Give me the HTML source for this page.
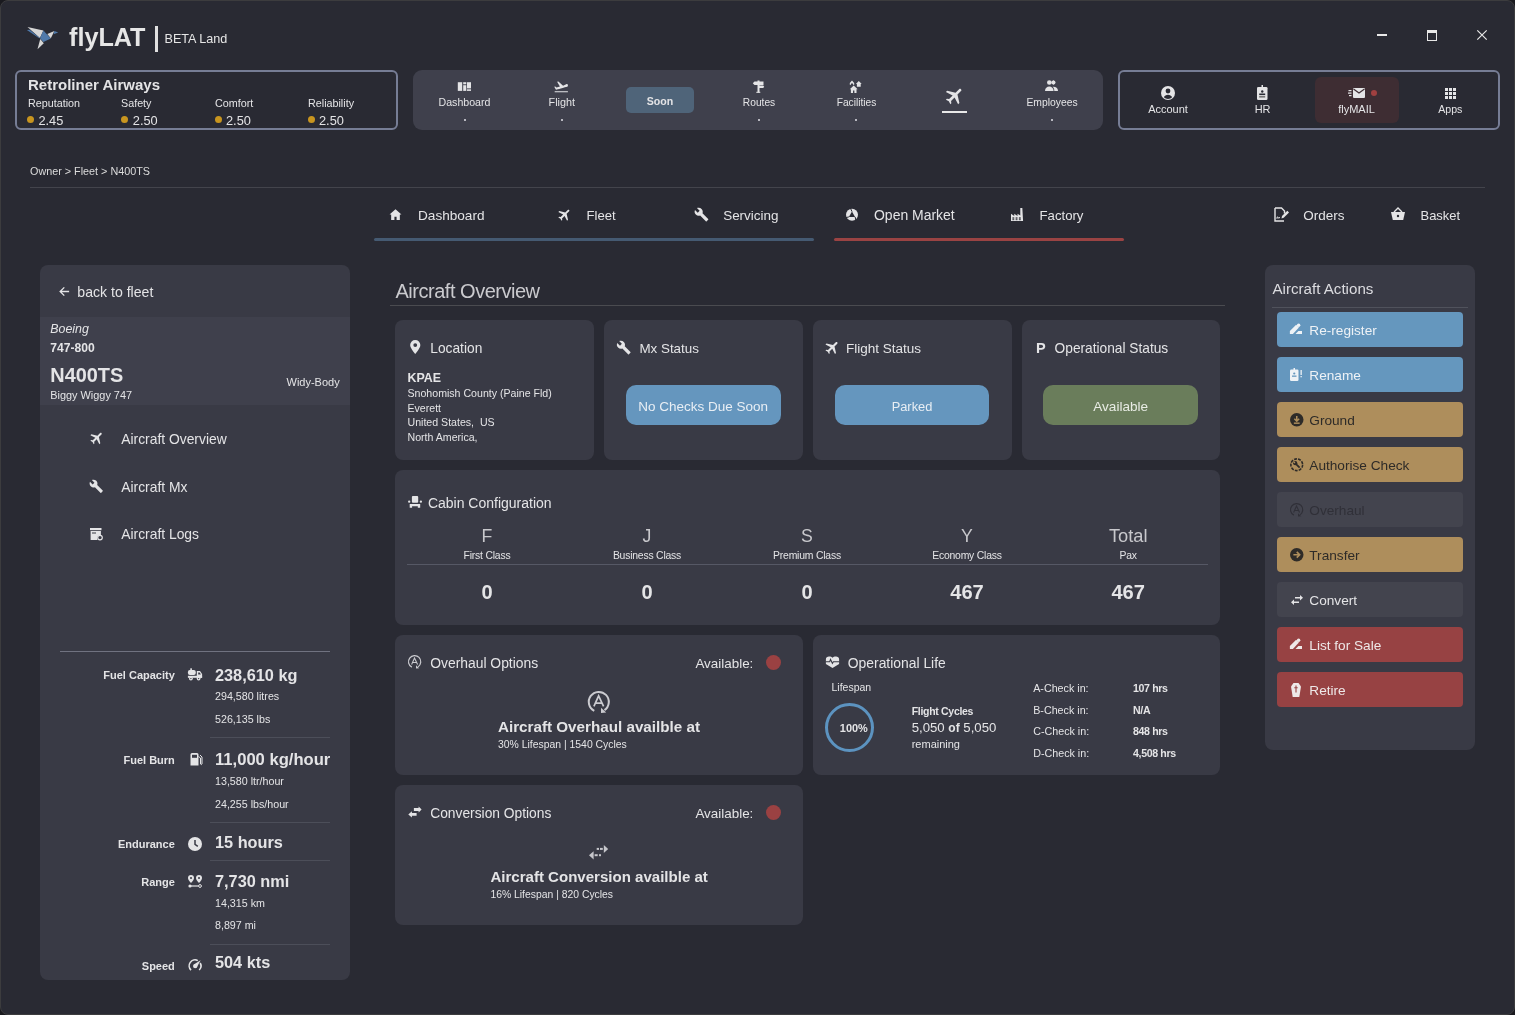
<!DOCTYPE html><html><head><meta charset="utf-8"><title>flyLAT</title><style>
html,body{margin:0;padding:0;width:1515px;height:1015px;overflow:hidden;background:#1a1a1f;}
body{font-family:"Liberation Sans",sans-serif;position:relative;-webkit-font-smoothing:antialiased;}
#win>div{will-change:transform;}
#win{position:absolute;left:0;top:0;width:1513px;height:1013px;border:1px solid #3c3c3e;border-radius:8px;background:#292a33;overflow:hidden;}
.t{position:absolute;white-space:nowrap;}
.r{position:absolute;}
.i{position:absolute;overflow:visible;}

</style></head><body><div id="win">
<div style="position:absolute;left:-1px;top:-1px;width:1515px;height:1015px;">
<svg class="i" style="left:27px;top:27px;width:32px;height:23px" viewBox="27 27 32 23" fill="#e4e4e6"><polygon points="27.5,26.9 43.4,30.4 39.9,38.1" fill="#d6d6d6"/><polygon points="26.9,30.1 29.6,29.7 39.9,38.1 39.2,38.3" fill="#4f79aa"/><polygon points="43.4,30.4 50.8,38.4 43.4,42 40.0,38.3" fill="#4f79aa"/><polygon points="47.3,34 54.4,31 50.8,38.2" fill="#d6d6d6"/><polygon points="54.4,31 58.2,32.5 53.6,34.3" fill="#4f79aa"/><polygon points="40.2,39 43.8,43.3 37.5,49.3" fill="#d6d6d6"/></svg>
<div class="t" style="top:25px;font-size:25.2px;line-height:25.2px;color:#e6e6e6;font-weight:700;left:69.00px;">flyLAT</div>
<div class="r" style="left:155px;top:26px;width:3px;height:26px;background:#e0e0e0;"></div>
<div class="t" style="top:33px;font-size:12.6px;line-height:12.6px;color:#e6e6e6;left:164.50px;">BETA Land</div>
<div class="r" style="left:1377px;top:33.5px;width:10px;height:2px;background:#e8e8e8;"></div>
<div class="r" style="left:1427px;top:30px;width:8px;height:7px;border:1px solid #e8e8e8;border-top:3px solid #e8e8e8;"></div>
<svg class="i" style="left:1477px;top:30px;width:10px;height:10px" viewBox="0 0 10 10" fill="#e4e4e6"><path d="M0.3 0.3 9.7 9.7M9.7 0.3 0.3 9.7" stroke="#e8e8e8" stroke-width="1.2" fill="none"/></svg>
<div class="r" style="left:15px;top:70px;width:379px;height:56px;border:2px solid #767d95;border-radius:6px;"></div>
<div class="t" style="top:77px;font-size:15.0px;line-height:15.0px;color:#e4e4e6;font-weight:700;left:28.00px;">Retroliner Airways</div>
<div class="t" style="top:98px;font-size:10.75px;line-height:10.75px;color:#e4e4e6;left:28.00px;">Reputation</div>
<div class="r" style="left:27.0px;top:116.2px;width:7px;height:7px;border-radius:50%;background:#c8951f;"></div>
<div class="t" style="top:115px;font-size:12.8px;line-height:12.8px;color:#e4e4e6;left:38.40px;">2.45</div>
<div class="t" style="top:98px;font-size:10.75px;line-height:10.75px;color:#e4e4e6;left:121.00px;">Safety</div>
<div class="r" style="left:121.0px;top:116.2px;width:7px;height:7px;border-radius:50%;background:#c8951f;"></div>
<div class="t" style="top:115px;font-size:12.8px;line-height:12.8px;color:#e4e4e6;left:132.80px;">2.50</div>
<div class="t" style="top:98px;font-size:10.75px;line-height:10.75px;color:#e4e4e6;left:215.00px;">Comfort</div>
<div class="r" style="left:214.8px;top:116.2px;width:7px;height:7px;border-radius:50%;background:#c8951f;"></div>
<div class="t" style="top:115px;font-size:12.8px;line-height:12.8px;color:#e4e4e6;left:226.00px;">2.50</div>
<div class="t" style="top:98px;font-size:10.75px;line-height:10.75px;color:#e4e4e6;left:308.00px;">Reliability</div>
<div class="r" style="left:308.2px;top:116.2px;width:7px;height:7px;border-radius:50%;background:#c8951f;"></div>
<div class="t" style="top:115px;font-size:12.8px;line-height:12.8px;color:#e4e4e6;left:319.00px;">2.50</div>
<div class="r" style="left:413px;top:70px;width:690px;height:60px;background:#3f404c;border-radius:9px;"></div>
<svg class="i" style="left:455px;top:80px;width:19px;height:13px" viewBox="455 80 19 13" fill="#e4e4e6"><path d="M457.8 82.2h4.4v8.7h-4.4z"/><path d="M463.2 82.2h3.1v2.1h-3.1z"/><path d="M463.2 85.2h3.1v5.7h-3.1z"/><path d="M467 82.2h4v6.2h-4z"/><path d="M467 89.3h4v1.6h-4z"/></svg>
<div class="t" style="top:97px;font-size:10.6px;line-height:10.6px;color:#e4e4e6;left:164.50px;width:600px;text-align:center;">Dashboard</div>
<div class="r" style="left:464px;top:119px;width:2px;height:2px;background:#b8b8c0;"></div>
<svg class="i" style="left:553.1px;top:78.6px;width:16.2px;height:16.2px" viewBox="0 0 24 24" fill="#e4e4e6"><path d="M2.5 18h19.6v1.7h-19.6zm19.57-9.36c-.21-.8-1.04-1.28-1.84-1.06L14.92 10l-6.9-6.43-1.93.51 4.14 7.17-4.97 1.33-1.97-1.54-1.45.39 2.59 4.49s7.12-1.9 16.57-4.43c.81-.23 1.28-1.05 1.07-1.85z"/></svg>
<div class="t" style="top:97px;font-size:10.8px;line-height:10.8px;color:#e4e4e6;left:261.80px;width:600px;text-align:center;">Flight</div>
<div class="r" style="left:560.5px;top:119px;width:2px;height:2px;background:#b8b8c0;"></div>
<div class="r" style="left:626px;top:87px;width:68px;height:26px;background:#4f6479;border-radius:5px;"></div>
<div class="t" style="top:96px;font-size:10.6px;line-height:10.6px;color:#e4e4e6;font-weight:700;left:360.00px;width:600px;text-align:center;">Soon</div>
<svg class="i" style="left:750px;top:78px;width:17px;height:17px" viewBox="750 78 17 17" fill="#e4e4e6"><path d="M757.5 80.5h2v12h-2z"/><path d="M752.8 83.2 754.5 81.5h9v3.5h-9z"/><path d="M759 85.5h4.2l1 1.2-1 1.2H759z"/><path d="M756.3 91.8h4v1h-4z"/></svg>
<div class="t" style="top:98px;font-size:10.2px;line-height:10.2px;color:#e4e4e6;left:459.00px;width:600px;text-align:center;">Routes</div>
<div class="r" style="left:758.3px;top:119px;width:2px;height:2px;background:#b8b8c0;"></div>
<svg class="i" style="left:847px;top:78px;width:18px;height:17px" viewBox="847 78 18 17" fill="#e4e4e6"><path d="M852 80.5 849.8 83v1.8h1.2v-1.3h2v1.3h1.2V83z"/><path d="M858.8 81 855.9 84h1v2.7h3.8V84h1z"/><path d="M853.7 85.5 849.8 89.2h1.1V93h5.6v-3.8h1.1z"/><path d="M853 90.6h1.4V93H853z" fill="#3f404c"/></svg>
<div class="t" style="top:98px;font-size:10.2px;line-height:10.2px;color:#e4e4e6;left:556.50px;width:600px;text-align:center;">Facilities</div>
<div class="r" style="left:855.3px;top:119px;width:2px;height:2px;background:#b8b8c0;"></div>
<svg class="i" style="left:943.79px;top:85.09px;width:21.81px;height:21.81px" viewBox="0 0 24 24" fill="#e4e4e6"><path d="M21 16v-2l-8-5V3.5c0-.83-.67-1.5-1.5-1.5S10 2.67 10 3.5V9l-8 5v2l8-2.5V19l-2 1.5V22l3.5-1 3.5 1v-1.5L13 19v-5.5l8 2.5z" transform="rotate(45 12 12)"/></svg>
<div class="r" style="left:942px;top:111px;width:25px;height:2px;background:#e8e8e8;"></div>
<svg class="i" style="left:1045px;top:80px;width:13px;height:11px" viewBox="0 0 13 11" fill="#e4e4e6"><circle cx="4.3" cy="2.5" r="2.3"/><path d="M8 0.3a2.3 2.3 0 0 1 0 4.5z"/><circle cx="8.4" cy="2.5" r="2.1"/><path d="M0 11c0-3 2-4.6 4.3-4.6S8.6 8 8.6 11z"/><path d="M9.3 11c0-2-.6-3.3-1.6-4.2 2.6-.3 5.3 1 5.3 4.2z"/></svg>
<div class="t" style="top:98px;font-size:10.35px;line-height:10.35px;color:#e4e4e6;left:752.00px;width:600px;text-align:center;">Employees</div>
<div class="r" style="left:1051.2px;top:119px;width:2px;height:2px;background:#b8b8c0;"></div>
<div class="r" style="left:1118px;top:70px;width:378px;height:56px;border:2px solid #767d95;border-radius:6px;"></div>
<div class="r" style="left:1315px;top:77px;width:84px;height:46px;background:#3e2d33;border-radius:6px;"></div>
<svg class="i" style="left:1161px;top:86px;width:14px;height:14px" viewBox="0 0 14 14" fill="#e4e4e6"><circle cx="7" cy="7" r="7"/><circle cx="7" cy="5" r="2.4" fill="#292a33"/><path d="M2.8 11.3c.8-1.6 2.4-2.5 4.2-2.5s3.4.9 4.2 2.5A6 6 0 0 1 7 13a6 6 0 0 1-4.2-1.7z" fill="#292a33"/></svg>
<div class="t" style="top:104px;font-size:11.0px;line-height:11.0px;color:#e4e4e6;left:868.00px;width:600px;text-align:center;">Account</div>
<svg class="i" style="left:1257px;top:85px;width:10.5px;height:15px" viewBox="0 0 10.5 15" fill="#e4e4e6"><rect x="0" y="2" width="10.5" height="13" rx="1.3"/><rect x="4.5" y="0" width="1.5" height="3.5"/><circle cx="5.25" cy="6.5" r="1.2" fill="#292a33"/><rect x="2.2" y="8.5" width="6" height="1.6" fill="#292a33"/><rect x="2.2" y="11" width="6" height="1.6" fill="#777"/></svg>
<div class="t" style="top:104px;font-size:11.0px;line-height:11.0px;color:#e4e4e6;left:962.60px;width:600px;text-align:center;">HR</div>
<svg class="i" style="left:1348px;top:88px;width:17px;height:10px" viewBox="0 0 17 10" fill="#e4e4e6"><rect x="5" y="0" width="12" height="10" rx="1"/><path d="M5.5 1 11 5 16.5 1" stroke="#3e2d33" stroke-width="1.2" fill="none"/><rect x="0.5" y="2" width="3" height="1.2"/><rect x="0" y="4.5" width="3.5" height="1.2"/><rect x="1" y="7" width="2.5" height="1.2"/></svg>
<div class="r" style="left:1371px;top:90px;width:6px;height:6px;border-radius:50%;background:#a04040;"></div>
<div class="t" style="top:104px;font-size:11.0px;line-height:11.0px;color:#e4e4e6;left:1056.50px;width:600px;text-align:center;">flyMAIL</div>
<svg class="i" style="left:1445px;top:87.5px;width:11px;height:11px" viewBox="0 0 11 11" fill="#e4e4e6"><rect x="0" y="0" width="3" height="3"/><rect x="0" y="4" width="3" height="3"/><rect x="0" y="8" width="3" height="3"/><rect x="4" y="0" width="3" height="3"/><rect x="4" y="4" width="3" height="3"/><rect x="4" y="8" width="3" height="3"/><rect x="8" y="0" width="3" height="3"/><rect x="8" y="4" width="3" height="3"/><rect x="8" y="8" width="3" height="3"/></svg>
<div class="t" style="top:104px;font-size:10.6px;line-height:10.6px;color:#e4e4e6;left:1150.30px;width:600px;text-align:center;">Apps</div>
<div class="t" style="top:166px;font-size:10.8px;line-height:10.8px;color:#dcdcdc;left:30.00px;">Owner &gt; Fleet &gt; N400TS</div>
<div class="r" style="left:30px;top:187px;width:1455px;height:1px;background:#43444c;"></div>
<svg class="i" style="left:389px;top:208px;width:13px;height:12px" viewBox="0 0 24 22" fill="#e4e4e6"><path d="M12 2 1 12h3v10h6v-6h4v6h6V12h3z"/></svg>
<div class="t" style="top:209px;font-size:13.6px;line-height:13.6px;color:#e4e4e6;left:418.00px;">Dashboard</div>
<svg class="i" style="left:556.91px;top:206.71px;width:15.58px;height:15.58px" viewBox="0 0 24 24" fill="#e4e4e6"><path d="M21 16v-2l-8-5V3.5c0-.83-.67-1.5-1.5-1.5S10 2.67 10 3.5V9l-8 5v2l8-2.5V19l-2 1.5V22l3.5-1 3.5 1v-1.5L13 19v-5.5l8 2.5z" transform="rotate(45 12 12)"/></svg>
<div class="t" style="top:209px;font-size:13.1px;line-height:13.1px;color:#e4e4e6;left:586.50px;">Fleet</div>
<svg class="i" style="left:694px;top:207px;width:15px;height:15px" viewBox="0 0 24 24" fill="#e4e4e6"><path d="M22.7 19l-9.1-9.1c.9-2.3.4-5-1.5-6.9-2-2-5-2.4-7.4-1.3L9 6 6 9 1.6 4.7C.4 7.1.9 10.1 2.9 12.1c1.9 1.9 4.6 2.4 6.9 1.5l9.1 9.1c.4.4 1 .4 1.4 0l2.3-2.3c.5-.4.5-1.1.1-1.4z"/></svg>
<div class="t" style="top:209px;font-size:13.45px;line-height:13.45px;color:#e4e4e6;left:723.20px;">Servicing</div>
<svg class="i" style="left:843px;top:206px;width:19px;height:18px" viewBox="843 206 19 18" fill="#e4e4e6"><circle cx="852" cy="214.7" r="6"/><path d="M852 211.6 848.9 216.9h6.2z" fill="#292a33"/><path d="M852 211.6 850.6 208.5M848.9 216.9 846 217.6M855.1 216.9 856 220.8" stroke="#292a33" stroke-width="1" fill="none"/></svg>
<div class="t" style="top:208px;font-size:13.98px;line-height:13.98px;color:#e4e4e6;left:874.00px;">Open Market</div>
<svg class="i" style="left:1011px;top:207.8px;width:13px;height:13.2px" viewBox="0 0 14 14" fill="#e4e4e6"><path d="M0 14V6l3.5 2.5V6L7 8.5V6l3 2V0h2.2v0L13 14z"/><rect x="1.5" y="10" width="2" height="1.4" fill="#292a33"/><rect x="5" y="10" width="2" height="1.4" fill="#292a33"/><rect x="8.5" y="10" width="2" height="1.4" fill="#292a33"/><rect x="1.5" y="12" width="2" height="1" fill="#292a33"/><rect x="5" y="12" width="2" height="1" fill="#292a33"/><rect x="8.5" y="12" width="2" height="1" fill="#292a33"/></svg>
<div class="t" style="top:209px;font-size:13.2px;line-height:13.2px;color:#e4e4e6;left:1039.50px;">Factory</div>
<svg class="i" style="left:1274px;top:208px;width:15px;height:13px" viewBox="0 0 15 13" fill="#e4e4e6"><path d="M1 0h6.5l3 3v2.5" stroke="#e4e4e6" stroke-width="1.4" fill="none"/><path d="M1 0v13h9" stroke="#e4e4e6" stroke-width="1.4" fill="none"/><path d="M7.5 10.5 8 8l5.3-5.3 1.7 1.7L9.7 9.7z"/><path d="M3 11V9h1v1h1.5v-1" stroke="#e4e4e6" stroke-width=".8" fill="none"/></svg>
<div class="t" style="top:209px;font-size:13.48px;line-height:13.48px;color:#e4e4e6;left:1303.30px;">Orders</div>
<svg class="i" style="left:1391px;top:208px;width:14px;height:12px" viewBox="0 0 14 12" fill="#e4e4e6"><path d="M0 4h14l-1.8 8H1.8z"/><path d="M3 4 7 0l4 4" stroke="#e4e4e6" stroke-width="1.4" fill="none"/><circle cx="7" cy="8" r="1.2" fill="#292a33"/></svg>
<div class="t" style="top:210px;font-size:12.95px;line-height:12.95px;color:#e4e4e6;left:1420.50px;">Basket</div>
<div class="r" style="left:373.6px;top:238.2px;width:440px;height:3.2px;background:#455a72;border-radius:1.6px;"></div>
<div class="r" style="left:833.6px;top:238.2px;width:290.4px;height:3.2px;background:#9a4343;border-radius:1.6px;"></div>
<div class="r" style="left:40px;top:265px;width:310px;height:715px;background:#393a45;border-radius:8px;"></div>
<div class="r" style="left:40px;top:317px;width:310px;height:88px;background:#3f404c;"></div>
<svg class="i" style="left:58.5px;top:285.8px;width:10.6px;height:11px" viewBox="0 0 11 11" fill="#e4e4e6"><path d="M10.5 5.5H1.5M5.5 1.2 1.2 5.5l4.3 4.3" stroke="#e4e4e6" stroke-width="1.4" fill="none"/></svg>
<div class="t" style="top:285px;font-size:14.1px;line-height:14.1px;color:#e4e4e6;left:77.30px;">back to fleet</div>
<div class="t" style="top:323px;font-size:12.4px;line-height:12.4px;color:#e4e4e6;font-style:italic;left:50.30px;">Boeing</div>
<div class="t" style="top:342px;font-size:12.1px;line-height:12.1px;color:#e4e4e6;font-weight:700;left:50.30px;">747-800</div>
<div class="t" style="top:366px;font-size:19.9px;line-height:19.9px;color:#e4e4e6;font-weight:700;left:50.30px;">N400TS</div>
<div class="t" style="top:390px;font-size:10.9px;line-height:10.9px;color:#e4e4e6;left:50.30px;">Biggy Wiggy 747</div>
<div class="t" style="top:377px;font-size:11.0px;line-height:11.0px;color:#e4e4e6;left:-260.30px;width:600px;text-align:right;">Widy-Body</div>
<svg class="i" style="left:88.50px;top:430.05px;width:16.01px;height:16.01px" viewBox="0 0 24 24" fill="#e4e4e6"><path d="M21 16v-2l-8-5V3.5c0-.83-.67-1.5-1.5-1.5S10 2.67 10 3.5V9l-8 5v2l8-2.5V19l-2 1.5V22l3.5-1 3.5 1v-1.5L13 19v-5.5l8 2.5z" transform="rotate(45 12 12)"/></svg>
<div class="t" style="top:433px;font-size:13.86px;line-height:13.86px;color:#e4e4e6;left:121.20px;">Aircraft Overview</div>
<svg class="i" style="left:88.5px;top:479px;width:14.5px;height:14.5px" viewBox="0 0 24 24" fill="#e4e4e6"><path d="M22.7 19l-9.1-9.1c.9-2.3.4-5-1.5-6.9-2-2-5-2.4-7.4-1.3L9 6 6 9 1.6 4.7C.4 7.1.9 10.1 2.9 12.1c1.9 1.9 4.6 2.4 6.9 1.5l9.1 9.1c.4.4 1 .4 1.4 0l2.3-2.3c.5-.4.5-1.1.1-1.4z"/></svg>
<div class="t" style="top:481px;font-size:13.86px;line-height:13.86px;color:#e4e4e6;left:121.20px;">Aircraft Mx</div>
<svg class="i" style="left:90px;top:528px;width:13px;height:12.5px" viewBox="0 0 13 12.5" fill="#e4e4e6"><rect x="0" y="0" width="11.5" height="2.2"/><path d="M0.6 3h10.3v4.5A3 3 0 0 0 7.5 12H0.6z"/><circle cx="10" cy="9.6" r="2.3" stroke="#e4e4e6" stroke-width="1.2" fill="none"/><rect x="2" y="4.5" width="4" height="1" fill="#393a45"/></svg>
<div class="t" style="top:528px;font-size:13.86px;line-height:13.86px;color:#e4e4e6;left:121.20px;">Aircraft Logs</div>
<div class="r" style="left:60px;top:651px;width:270px;height:1px;background:#707280;"></div>
<div class="t" style="top:670px;font-size:11.0px;line-height:11.0px;color:#e4e4e6;font-weight:700;left:-425.20px;width:600px;text-align:right;">Fuel Capacity</div>
<svg class="i" style="left:185px;top:666px;width:20px;height:16px" viewBox="185 666 20 16" fill="#e4e4e6"><rect x="187.9" y="669.9" width="7.9" height="5.1" rx="2"/><rect x="190.3" y="668.3" width="1.6" height="2"/><rect x="187.9" y="675.8" width="14.2" height="2"/><path d="M196.8 671.1h3.2l2.1 3v3.7h-5.3z"/><path d="M198.2 672.5h1.5l1.2 2.1h-2.7z" fill="#393a45"/><circle cx="190.9" cy="678.6" r="1.9"/><circle cx="198.6" cy="678.6" r="1.9"/><circle cx="190.9" cy="678.6" r=".7" fill="#393a45"/><circle cx="198.6" cy="678.6" r=".7" fill="#393a45"/></svg>
<div class="t" style="top:667px;font-size:16.3px;line-height:16.3px;color:#e4e4e6;font-weight:700;left:215.00px;">238,610 kg</div>
<div class="t" style="top:691px;font-size:10.7px;line-height:10.7px;color:#e4e4e6;left:215.00px;">294,580 litres</div>
<div class="t" style="top:714px;font-size:10.7px;line-height:10.7px;color:#e4e4e6;left:215.00px;">526,135 lbs</div>
<div class="r" style="left:210px;top:737px;width:120px;height:1px;background:#4c4e59;"></div>
<div class="t" style="top:755px;font-size:11.0px;line-height:11.0px;color:#e4e4e6;font-weight:700;left:-425.20px;width:600px;text-align:right;">Fuel Burn</div>
<svg class="i" style="left:189.5px;top:753px;width:12px;height:12.5px" viewBox="0 0 12 12.5" fill="#e4e4e6"><path d="M0.5 1.5A1.5 1.5 0 0 1 2 0h5a1.5 1.5 0 0 1 1.5 1.5v11H.5z"/><rect x="2" y="1.8" width="5" height="3" fill="#393a45"/><path d="M8.5 3.5 10.5 5v6a.9.9 0 0 0 1.5 0V4L10 2" stroke="#e4e4e6" stroke-width="1" fill="none"/></svg>
<div class="t" style="top:752px;font-size:16.6px;line-height:16.6px;color:#e4e4e6;font-weight:700;left:215.00px;">11,000 kg/hour</div>
<div class="t" style="top:776px;font-size:10.7px;line-height:10.7px;color:#e4e4e6;left:215.00px;">13,580 ltr/hour</div>
<div class="t" style="top:799px;font-size:10.7px;line-height:10.7px;color:#e4e4e6;left:215.00px;">24,255 lbs/hour</div>
<div class="r" style="left:210px;top:822px;width:120px;height:1px;background:#4c4e59;"></div>
<div class="t" style="top:839px;font-size:11.0px;line-height:11.0px;color:#e4e4e6;font-weight:700;left:-425.20px;width:600px;text-align:right;">Endurance</div>
<svg class="i" style="left:188px;top:836.5px;width:14px;height:14px" viewBox="0 0 14 14" fill="#e4e4e6"><circle cx="7" cy="7" r="7"/><path d="M7 3v4.3l2.8 2" stroke="#393a45" stroke-width="1.5" fill="none"/></svg>
<div class="t" style="top:834px;font-size:16.3px;line-height:16.3px;color:#e4e4e6;font-weight:700;left:215.00px;">15 hours</div>
<div class="r" style="left:210px;top:859.5px;width:120px;height:1px;background:#4c4e59;"></div>
<div class="t" style="top:877px;font-size:11.0px;line-height:11.0px;color:#e4e4e6;font-weight:700;left:-425.20px;width:600px;text-align:right;">Range</div>
<svg class="i" style="left:188px;top:874.5px;width:14px;height:13px" viewBox="0 0 14 13" fill="#e4e4e6"><path d="M3 0a3 3 0 0 1 3 3c0 2-3 5-3 5S0 5 0 3a3 3 0 0 1 3-3z"/><path d="M11 0a3 3 0 0 1 3 3c0 2-3 5-3 5S8 5 8 3a3 3 0 0 1 3-3z"/><circle cx="3" cy="3" r="1" fill="#393a45"/><circle cx="11" cy="3" r="1" fill="#393a45"/><circle cx="2" cy="11" r="1.6"/><circle cx="12" cy="11" r="1.4" stroke="#e4e4e6" stroke-width="1" fill="none"/><rect x="3" y="10.4" width="7.5" height="1.2"/></svg>
<div class="t" style="top:873px;font-size:16.3px;line-height:16.3px;color:#e4e4e6;font-weight:700;left:215.00px;">7,730 nmi</div>
<div class="t" style="top:898px;font-size:10.7px;line-height:10.7px;color:#e4e4e6;left:215.00px;">14,315 km</div>
<div class="t" style="top:920px;font-size:10.7px;line-height:10.7px;color:#e4e4e6;left:215.00px;">8,897 mi</div>
<div class="r" style="left:210px;top:944px;width:120px;height:1px;background:#4c4e59;"></div>
<div class="t" style="top:961px;font-size:11.0px;line-height:11.0px;color:#e4e4e6;font-weight:700;left:-425.20px;width:600px;text-align:right;">Speed</div>
<svg class="i" style="left:186px;top:956px;width:18px;height:17px" viewBox="186 956 18 17" fill="#e4e4e6"><path d="M191 970.1A5.9 5.9 0 0 1 197.8 960.6M200.2 963A5.9 5.9 0 0 1 199.2 970" stroke="#e4e4e6" stroke-width="1.6" fill="none"/><circle cx="195.2" cy="966.1" r="2.2"/><path d="M193.8 964.6 200.6 960.3 196.7 967.6z"/></svg>
<div class="t" style="top:954px;font-size:16.3px;line-height:16.3px;color:#e4e4e6;font-weight:700;left:215.00px;">504 kts</div>
<div class="t" style="top:281px;font-size:20.0px;line-height:20.0px;color:#cacace;letter-spacing:-0.48px;left:395.50px;">Aircraft Overview</div>
<div class="r" style="left:390px;top:305px;width:835px;height:1px;background:#4a4b50;"></div>
<div class="r" style="left:395px;top:320px;width:199px;height:140px;background:#393a45;border-radius:8px;"></div>
<div class="r" style="left:604px;top:320px;width:199px;height:140px;background:#393a45;border-radius:8px;"></div>
<div class="r" style="left:813px;top:320px;width:199px;height:140px;background:#393a45;border-radius:8px;"></div>
<div class="r" style="left:1021.5px;top:320px;width:198.5px;height:140px;background:#393a45;border-radius:8px;"></div>
<svg class="i" style="left:410px;top:340px;width:10.5px;height:14px" viewBox="0 0 16 22" fill="#e4e4e6"><path d="M8 0a8 8 0 0 0-8 8c0 5.5 8 14 8 14s8-8.5 8-14a8 8 0 0 0-8-8zm0 11a3 3 0 1 1 0-6 3 3 0 0 1 0 6z"/></svg>
<div class="t" style="top:342px;font-size:13.75px;line-height:13.75px;color:#e4e4e6;left:430.30px;">Location</div>
<div class="t" style="top:372px;font-size:12.4px;line-height:12.4px;color:#e4e4e6;font-weight:700;left:407.50px;">KPAE</div>
<div class="t" style="top:388px;font-size:10.6px;line-height:10.6px;color:#e4e4e6;left:407.50px;">Snohomish County (Paine Fld)</div>
<div class="t" style="top:403px;font-size:10.6px;line-height:10.6px;color:#e4e4e6;left:407.50px;">Everett</div>
<div class="t" style="top:417px;font-size:10.6px;line-height:10.6px;color:#e4e4e6;left:407.50px;">United States,&nbsp; US</div>
<div class="t" style="top:432px;font-size:10.6px;line-height:10.6px;color:#e4e4e6;left:407.50px;">North America,</div>
<svg class="i" style="left:616px;top:339.5px;width:15.5px;height:15px" viewBox="0 0 24 24" fill="#e4e4e6"><path d="M22.7 19l-9.1-9.1c.9-2.3.4-5-1.5-6.9-2-2-5-2.4-7.4-1.3L9 6 6 9 1.6 4.7C.4 7.1.9 10.1 2.9 12.1c1.9 1.9 4.6 2.4 6.9 1.5l9.1 9.1c.4.4 1 .4 1.4 0l2.3-2.3c.5-.4.5-1.1.1-1.4z"/></svg>
<div class="t" style="top:342px;font-size:13.4px;line-height:13.4px;color:#e4e4e6;left:639.40px;">Mx Status</div>
<div class="r" style="left:625.6px;top:384.7px;width:155px;height:40.4px;background:#6596be;border-radius:10px;"></div>
<div class="t" style="top:400px;font-size:13.5px;line-height:13.5px;color:#e8eef4;left:403.10px;width:600px;text-align:center;">No Checks Due Soon</div>
<svg class="i" style="left:824.25px;top:338.50px;width:17.00px;height:17.00px" viewBox="0 0 24 24" fill="#e4e4e6"><path d="M21 16v-2l-8-5V3.5c0-.83-.67-1.5-1.5-1.5S10 2.67 10 3.5V9l-8 5v2l8-2.5V19l-2 1.5V22l3.5-1 3.5 1v-1.5L13 19v-5.5l8 2.5z" transform="rotate(45 12 12)"/></svg>
<div class="t" style="top:342px;font-size:13.53px;line-height:13.53px;color:#e4e4e6;left:846.00px;">Flight Status</div>
<div class="r" style="left:834.5px;top:384.7px;width:154.5px;height:40.4px;background:#6596be;border-radius:10px;"></div>
<div class="t" style="top:401px;font-size:12.85px;line-height:12.85px;color:#e8eef4;left:612.00px;width:600px;text-align:center;">Parked</div>
<div class="t" style="top:341px;font-size:14.5px;line-height:14.5px;color:#e4e4e6;font-weight:700;left:1036.00px;">P</div>
<div class="t" style="top:342px;font-size:13.72px;line-height:13.72px;color:#e4e4e6;left:1054.60px;">Operational Status</div>
<div class="r" style="left:1043.3px;top:384.7px;width:154.5px;height:40.4px;background:#6a7d5b;border-radius:10px;"></div>
<div class="t" style="top:400px;font-size:13.59px;line-height:13.59px;color:#e8ece4;left:820.70px;width:600px;text-align:center;">Available</div>
<div class="r" style="left:395px;top:470px;width:825px;height:155px;background:#393a45;border-radius:8px;"></div>
<svg class="i" style="left:405px;top:493px;width:20px;height:18px" viewBox="405 493 20 18" fill="#e4e4e6"><rect x="411.9" y="496" width="6.3" height="6.8" rx="1"/><circle cx="409.2" cy="501.7" r="1.15"/><circle cx="420.9" cy="501.7" r="1.15"/><path d="M409.7 504h10.5v3.8h-2.4v-1.6h-5.7v1.6h-2.4z"/></svg>
<div class="t" style="top:496px;font-size:14.0px;line-height:14.0px;color:#e4e4e6;left:427.90px;">Cabin Configuration</div>
<div class="t" style="top:528px;font-size:17.7px;line-height:17.7px;color:#c8c8cc;left:187.00px;width:600px;text-align:center;">F</div>
<div class="t" style="top:551px;font-size:10.4px;line-height:10.4px;color:#e4e4e6;letter-spacing:-0.2px;left:187.00px;width:600px;text-align:center;">First Class</div>
<div class="t" style="top:582px;font-size:20.1px;line-height:20.1px;color:#e4e4e6;font-weight:700;left:187.00px;width:600px;text-align:center;">0</div>
<div class="t" style="top:528px;font-size:17.7px;line-height:17.7px;color:#c8c8cc;left:347.00px;width:600px;text-align:center;">J</div>
<div class="t" style="top:551px;font-size:10.4px;line-height:10.4px;color:#e4e4e6;letter-spacing:-0.2px;left:347.00px;width:600px;text-align:center;">Business Class</div>
<div class="t" style="top:582px;font-size:20.1px;line-height:20.1px;color:#e4e4e6;font-weight:700;left:347.00px;width:600px;text-align:center;">0</div>
<div class="t" style="top:528px;font-size:17.7px;line-height:17.7px;color:#c8c8cc;left:507.00px;width:600px;text-align:center;">S</div>
<div class="t" style="top:551px;font-size:10.4px;line-height:10.4px;color:#e4e4e6;letter-spacing:-0.2px;left:507.00px;width:600px;text-align:center;">Premium Class</div>
<div class="t" style="top:582px;font-size:20.1px;line-height:20.1px;color:#e4e4e6;font-weight:700;left:507.00px;width:600px;text-align:center;">0</div>
<div class="t" style="top:528px;font-size:17.7px;line-height:17.7px;color:#c8c8cc;left:667.00px;width:600px;text-align:center;">Y</div>
<div class="t" style="top:551px;font-size:10.4px;line-height:10.4px;color:#e4e4e6;letter-spacing:-0.2px;left:667.00px;width:600px;text-align:center;">Economy Class</div>
<div class="t" style="top:582px;font-size:20.1px;line-height:20.1px;color:#e4e4e6;font-weight:700;left:667.00px;width:600px;text-align:center;">467</div>
<div class="t" style="top:527px;font-size:18.3px;line-height:18.3px;color:#c8c8cc;left:828.20px;width:600px;text-align:center;">Total</div>
<div class="t" style="top:551px;font-size:10.4px;line-height:10.4px;color:#e4e4e6;letter-spacing:-0.2px;left:828.20px;width:600px;text-align:center;">Pax</div>
<div class="t" style="top:582px;font-size:20.1px;line-height:20.1px;color:#e4e4e6;font-weight:700;left:828.20px;width:600px;text-align:center;">467</div>
<div class="r" style="left:407px;top:564px;width:801px;height:1px;background:#565865;"></div>
<div class="r" style="left:395px;top:635px;width:407.5px;height:140px;background:#393a45;border-radius:8px;"></div>
<svg class="i" style="left:408px;top:655px;width:13.5px;height:13.5px" viewBox="0 0 22 22" fill="#e4e4e6"><path d="M6.26 19.8A10 10 0 1 1 16.5 19.1" stroke="#cbcbd0" stroke-width="2" fill="none"/><path d="M13 16.8V21.9L18.2 21.6z" fill="#cbcbd0"/><path d="M5.9 15.4 10.6 4.9 15.6 15.4M7.4 12.2h6.4" stroke="#cbcbd0" stroke-width="1.7" fill="none"/></svg>
<div class="t" style="top:657px;font-size:13.88px;line-height:13.88px;color:#e4e4e6;left:430.20px;">Overhaul Options</div>
<div class="t" style="top:657px;font-size:13.43px;line-height:13.43px;color:#e4e4e6;left:695.40px;">Available:</div>
<div class="r" style="left:765.5px;top:654.5px;width:15px;height:15px;border-radius:50%;background:#9a4142;"></div>
<svg class="i" style="left:588px;top:691px;width:22px;height:22px" viewBox="0 0 22 22" fill="#e4e4e6"><path d="M6.26 19.8A10 10 0 1 1 16.5 19.1" stroke="#cbcbd0" stroke-width="2" fill="none"/><path d="M13 16.8V21.9L18.2 21.6z" fill="#cbcbd0"/><path d="M5.9 15.4 10.6 4.9 15.6 15.4M7.4 12.2h6.4" stroke="#cbcbd0" stroke-width="1.7" fill="none"/></svg>
<div class="t" style="top:719px;font-size:15.21px;line-height:15.21px;color:#e4e4e6;font-weight:700;left:498.00px;">Aircraft Overhaul availble at</div>
<div class="t" style="top:740px;font-size:10.42px;line-height:10.42px;color:#e4e4e6;left:498.00px;">30% Lifespan | 1540 Cycles</div>
<div class="r" style="left:395px;top:785px;width:407.5px;height:140px;background:#393a45;border-radius:8px;"></div>
<svg class="i" style="left:405px;top:803px;width:20px;height:17px" viewBox="405 803 20 17" fill="#e4e4e6"><path d="M413.9 808.1h4.7v-1.6l3 3-3 3.1v-1.5h-4.7z"/><path d="M416.6 813h-4.7v-1.7l-3.6 3.1 3.6 3.2v-1.8h4.7z"/></svg>
<div class="t" style="top:807px;font-size:13.8px;line-height:13.8px;color:#e4e4e6;left:430.20px;">Conversion Options</div>
<div class="t" style="top:807px;font-size:13.43px;line-height:13.43px;color:#e4e4e6;left:695.40px;">Available:</div>
<div class="r" style="left:765.5px;top:804.5px;width:15px;height:15px;border-radius:50%;background:#9a4142;"></div>
<svg class="i" style="left:586px;top:842px;width:26px;height:20px" viewBox="586 842 26 20" fill="#c6c6cb"><path d="M603.8 844.9 608.2 848.9 603.8 852.9z"/><rect x="596.7" y="847.9" width="2.3" height="2"/><rect x="600" y="847.9" width="2.8" height="2"/><path d="M593.6 851.3 589 855.2 593.6 859.5z"/><rect x="594.6" y="854.2" width="3.1" height="2"/><rect x="599" y="854.2" width="2" height="2"/></svg>
<div class="t" style="top:869px;font-size:15.06px;line-height:15.06px;color:#e4e4e6;font-weight:700;left:490.40px;">Aircraft Conversion availble at</div>
<div class="t" style="top:890px;font-size:10.39px;line-height:10.39px;color:#e4e4e6;left:490.40px;">16% Lifespan | 820 Cycles</div>
<div class="r" style="left:813px;top:635px;width:407px;height:140px;background:#393a45;border-radius:8px;"></div>
<svg class="i" style="left:823px;top:654px;width:19px;height:16px" viewBox="823 654 19 16" fill="#e4e4e6"><path d="M825.9 659.2C825.9 657.5 827.3 656.5 829 656.5 830.6 656.5 831.8 657 832.5 657.8 833.2 657 834.4 656.5 836 656.5 837.7 656.5 839.1 657.5 839.1 659.2V663.9L832.5 668 825.9 663.9z"/><path d="M825.5 661.7H829.7L830.5 659.4 832.4 663.3 833.4 661.7H839.5" stroke="#393a45" stroke-width="1.05" fill="none"/></svg>
<div class="t" style="top:657px;font-size:13.88px;line-height:13.88px;color:#e4e4e6;left:847.80px;">Operational Life</div>
<div class="t" style="top:682px;font-size:10.5px;line-height:10.5px;color:#e4e4e6;left:831.50px;">Lifespan</div>
<div class="r" style="left:825px;top:703px;width:43px;height:43px;border:3px solid #5c93c0;border-radius:50%;"></div>
<div class="t" style="top:723px;font-size:10.95px;line-height:10.95px;color:#e4e4e6;font-weight:700;left:553.80px;width:600px;text-align:center;">100%</div>
<div class="t" style="top:706px;font-size:10.5px;line-height:10.5px;color:#e4e4e6;font-weight:700;letter-spacing:-0.3px;left:911.70px;">Flight Cycles</div>
<div class="t" style="top:721px;font-size:13.2px;line-height:13.2px;color:#e4e4e6;left:911.70px;">5,050 <b style="font-size:12px">of</b> 5,050</div>
<div class="t" style="top:739px;font-size:11.0px;line-height:11.0px;color:#e4e4e6;left:911.70px;">remaining</div>
<div class="t" style="top:683px;font-size:10.72px;line-height:10.72px;color:#e4e4e6;left:1033.20px;">A-Check in:</div>
<div class="t" style="top:683px;font-size:10.6px;line-height:10.6px;color:#e4e4e6;font-weight:700;letter-spacing:-0.35px;left:1133.00px;">107 hrs</div>
<div class="t" style="top:705px;font-size:10.72px;line-height:10.72px;color:#e4e4e6;left:1033.20px;">B-Check in:</div>
<div class="t" style="top:705px;font-size:10.6px;line-height:10.6px;color:#e4e4e6;font-weight:700;letter-spacing:-0.35px;left:1133.00px;">N/A</div>
<div class="t" style="top:726px;font-size:10.72px;line-height:10.72px;color:#e4e4e6;left:1033.20px;">C-Check in:</div>
<div class="t" style="top:726px;font-size:10.6px;line-height:10.6px;color:#e4e4e6;font-weight:700;letter-spacing:-0.35px;left:1133.00px;">848 hrs</div>
<div class="t" style="top:748px;font-size:10.72px;line-height:10.72px;color:#e4e4e6;left:1033.20px;">D-Check in:</div>
<div class="t" style="top:748px;font-size:10.6px;line-height:10.6px;color:#e4e4e6;font-weight:700;letter-spacing:-0.35px;left:1133.00px;">4,508 hrs</div>
<div class="r" style="left:1265px;top:265px;width:210px;height:485px;background:#393a45;border-radius:8px;"></div>
<div class="t" style="top:281px;font-size:15.13px;line-height:15.13px;color:#dcdce0;left:1272.50px;">Aircraft Actions</div>
<div class="r" style="left:1272px;top:306.5px;width:196px;height:1px;background:#50525c;"></div>
<div class="r" style="left:1277px;top:312px;width:186px;height:35px;background:#6597be;border-radius:4px;"></div>
<svg class="i" style="left:1286px;top:318px;width:20px;height:18px" viewBox="1286 318 20 18" fill="#e4e4e6"><path d="M1289.9 334.1V331L1296.1 324.8L1298.9 327.6L1292.9 334.1z" fill="#eef2f6"/><circle cx="1298.6" cy="325.2" r="1.75" fill="#eef2f6"/><path d="M1295.5 334.1L1298.4 331H1302V334.1z" fill="#eef2f6"/></svg>
<div class="t" style="top:324px;font-size:13.65px;line-height:13.65px;color:#eef2f6;left:1309.30px;">Re-register</div>
<div class="r" style="left:1277px;top:357px;width:186px;height:35px;background:#6597be;border-radius:4px;"></div>
<svg class="i" style="left:1290px;top:368px;width:12px;height:13px" viewBox="0 0 12 13" fill="#e4e4e6"><rect x="0" y="1.5" width="8.5" height="11.5" rx="1.2" fill="#eef2f6"/><rect x="3.5" y="0" width="1.5" height="3" fill="#eef2f6"/><circle cx="4.25" cy="5.5" r="1.1" fill="#6597be"/><rect x="2" y="7.5" width="4.5" height="1.3" fill="#6597be"/><rect x="10.5" y="2" width="1.3" height="5" fill="#eef2f6"/><rect x="10.5" y="8" width="1.3" height="1.3" fill="#eef2f6"/></svg>
<div class="t" style="top:369px;font-size:13.65px;line-height:13.65px;color:#eef2f6;left:1309.30px;">Rename</div>
<div class="r" style="left:1277px;top:402px;width:186px;height:35px;background:#ae8e5c;border-radius:4px;"></div>
<svg class="i" style="left:1290px;top:413px;width:13.5px;height:13.5px" viewBox="0 0 14 14" fill="#e4e4e6"><circle cx="7" cy="7" r="7" fill="#2e2b28"/><path d="M7 3v5M4.5 6l2.5 2.5L9.5 6" stroke="#ae8e5c" stroke-width="1.6" fill="none"/><rect x="4" y="9.8" width="6" height="1.5" fill="#ae8e5c"/></svg>
<div class="t" style="top:414px;font-size:13.65px;line-height:13.65px;color:#2e2b28;left:1309.30px;">Ground</div>
<div class="r" style="left:1277px;top:447px;width:186px;height:35px;background:#ae8e5c;border-radius:4px;"></div>
<svg class="i" style="left:1290px;top:458px;width:13.5px;height:13.5px" viewBox="0 0 14 14" fill="#e4e4e6"><circle cx="7" cy="7" r="6.1" stroke="#2e2b28" stroke-width="1.6" stroke-dasharray="3 1.2" fill="none"/><path d="M6 6 10 10" stroke="#2e2b28" stroke-width="1.9" fill="none"/><circle cx="5.4" cy="5.4" r="2.2" fill="#2e2b28"/><path d="M4.3 3.4 5.6 4.7 4.7 5.6 3.4 4.3z" fill="#ae8e5c"/></svg>
<div class="t" style="top:459px;font-size:13.65px;line-height:13.65px;color:#2e2b28;left:1309.30px;">Authorise Check</div>
<div class="r" style="left:1277px;top:492px;width:186px;height:35px;background:#43444e;border-radius:4px;"></div>
<svg class="i" style="left:1290px;top:503px;width:13.5px;height:13.5px" viewBox="0 0 22 22" fill="#e4e4e6"><path d="M6.26 19.8A10 10 0 1 1 16.5 19.1" stroke="#303038" stroke-width="2" fill="none"/><path d="M13 16.8V21.9L18.2 21.6z" fill="#303038"/><path d="M5.9 15.4 10.6 4.9 15.6 15.4M7.4 12.2h6.4" stroke="#303038" stroke-width="1.7" fill="none"/></svg>
<div class="t" style="top:504px;font-size:13.65px;line-height:13.65px;color:#303038;left:1309.30px;">Overhaul</div>
<div class="r" style="left:1277px;top:537px;width:186px;height:35px;background:#ae8e5c;border-radius:4px;"></div>
<svg class="i" style="left:1290px;top:548px;width:13.5px;height:13.5px" viewBox="0 0 14 14" fill="#e4e4e6"><circle cx="7" cy="7" r="7" fill="#2e2b28"/><path d="M3.5 7h6M7 4l3 3-3 3" stroke="#ae8e5c" stroke-width="1.7" fill="none"/></svg>
<div class="t" style="top:549px;font-size:13.65px;line-height:13.65px;color:#2e2b28;left:1309.30px;">Transfer</div>
<div class="r" style="left:1277px;top:582px;width:186px;height:35px;background:#43444e;border-radius:4px;"></div>
<svg class="i" style="left:1290.5px;top:594.5px;width:12px;height:10px" viewBox="0 0 12 10" fill="#e4e4e6"><path d="M12 2.7 9 0v1.9H4v1.6h5v1.9z" fill="#e4e4e6"/><path d="M0 7.3 3 4.6v1.9h5v1.6H3V10z" fill="#e4e4e6"/></svg>
<div class="t" style="top:594px;font-size:13.65px;line-height:13.65px;color:#e4e4e6;left:1309.30px;">Convert</div>
<div class="r" style="left:1277px;top:627px;width:186px;height:35px;background:#974243;border-radius:4px;"></div>
<svg class="i" style="left:1286px;top:633px;width:20px;height:18px" viewBox="1286 633 20 18" fill="#e4e4e6"><path d="M1289.9 649.1V646L1296.1 639.8L1298.9 642.6L1292.9 649.1z" fill="#eee8e8"/><circle cx="1298.6" cy="640.2" r="1.75" fill="#eee8e8"/><path d="M1295.5 649.1L1298.4 646H1302V649.1z" fill="#eee8e8"/></svg>
<div class="t" style="top:639px;font-size:13.65px;line-height:13.65px;color:#eee8e8;left:1309.30px;">List for Sale</div>
<div class="r" style="left:1277px;top:672px;width:186px;height:35px;background:#974243;border-radius:4px;"></div>
<svg class="i" style="left:1291px;top:682.5px;width:10px;height:14px" viewBox="0 0 10 14" fill="#e4e4e6"><path d="M2.5 0h5L10 3.5 8.3 14H1.7L0 3.5z" fill="#eee8e8"/><path d="M5 2.5v7M3.3 4.8h3.4" stroke="#974243" stroke-width="1.1"/></svg>
<div class="t" style="top:684px;font-size:13.65px;line-height:13.65px;color:#eee8e8;left:1309.30px;">Retire</div>
</div></div></body></html>
